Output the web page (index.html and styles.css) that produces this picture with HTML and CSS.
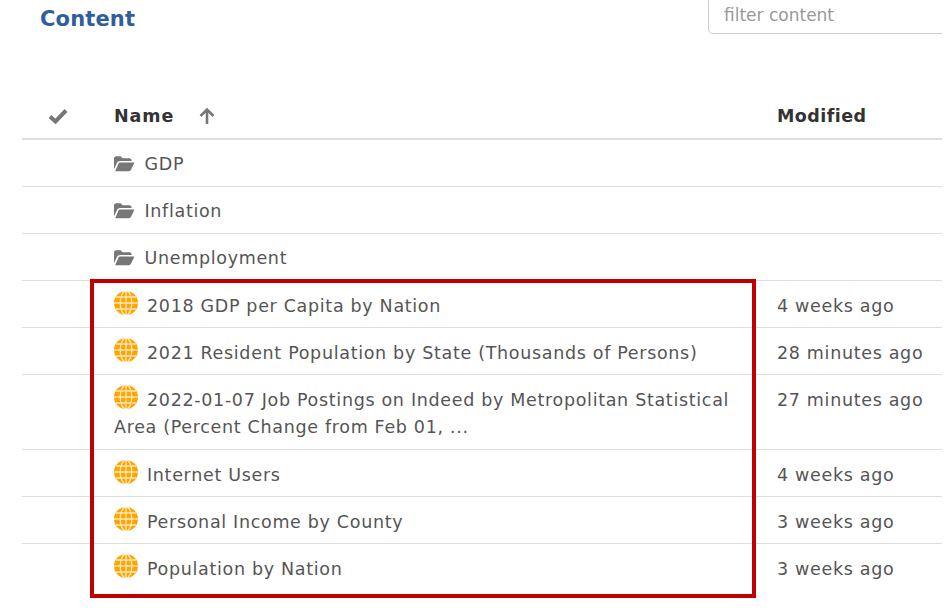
FILE: index.html
```html
<!DOCTYPE html>
<html lang="en">
<head>
<meta charset="utf-8">
<title>Content</title>
<link rel="stylesheet" href="styles.css">
</head>
<body>
<svg class="defs" width="0" height="0" aria-hidden="true">
  <symbol id="globe" viewBox="0 0 24 24">
    <circle cx="12" cy="12" r="12" fill="#ffa500"/>
    <g fill="none" stroke="#fff" stroke-width="1.3" opacity=".72">
      <ellipse cx="12" cy="12" rx="5.8" ry="12"/>
      <path d="M12 0v24M0 12h24M2 6h20M2 18h20"/>
    </g>
  </symbol>
  <symbol id="folder" viewBox="0 0 21 16">
    <path fill="#777" d="M0 2.200C0 1 1 0 2.200 0h4.600l2 2.200h7c1.200 0 2.200 1 2.200 2.200V5H6.200c-1.300 0-2.500.7-3.100 1.900L0 13z"/>
    <path fill="#777" d="M6.400 6.400H21l-3.600 7.600c-.4.8-1.200 1.300-2 1.300H1.200l3.300-7.600c.4-.8 1.100-1.300 1.900-1.300z"/>
  </symbol>
</svg>
<main class="page">
  <header class="top">
    <h1 class="title">Content</h1>
    <input class="filter" type="text" placeholder="filter content">
  </header>
  <section class="listing">
    <div class="row head">
      <div class="check"><svg width="20" height="16" viewBox="0 0 20 16"><path d="M2 8.500l5.500 5L18 2.500" fill="none" stroke="#777" stroke-width="4"/></svg></div>
      <div class="name"><span class="name-label">Name</span><svg class="arrow" width="16" height="18" viewBox="0 0 16 18"><path d="M8 17V2.500M1.500 9L8 2.500 14.500 9" fill="none" stroke="#777" stroke-width="2.600"/></svg></div>
      <div class="modified">Modified</div>
    </div>
    <div class="row"><div class="check"></div><div class="name"><svg class="folder"><use href="#folder"/></svg>GDP</div><div class="modified"></div></div>
    <div class="row"><div class="check"></div><div class="name"><svg class="folder"><use href="#folder"/></svg>Inflation</div><div class="modified"></div></div>
    <div class="row"><div class="check"></div><div class="name"><svg class="folder"><use href="#folder"/></svg>Unemployment</div><div class="modified"></div></div>
    <div class="row item"><div class="check"></div><div class="name"><svg class="globe"><use href="#globe"/></svg>2018 GDP per Capita by Nation</div><div class="modified">4 weeks ago</div></div>
    <div class="row item"><div class="check"></div><div class="name"><svg class="globe"><use href="#globe"/></svg>2021 Resident Population by State (Thousands of Persons)</div><div class="modified">28 minutes ago</div></div>
    <div class="row item tall"><div class="check"></div><div class="name"><svg class="globe"><use href="#globe"/></svg>2022-01-07 Job Postings on Indeed by Metropolitan Statistical Area (Percent Change from Feb 01, ...</div><div class="modified">27 minutes ago</div></div>
    <div class="row item"><div class="check"></div><div class="name"><svg class="globe"><use href="#globe"/></svg>Internet Users</div><div class="modified">4 weeks ago</div></div>
    <div class="row item"><div class="check"></div><div class="name"><svg class="globe"><use href="#globe"/></svg>Personal Income by County</div><div class="modified">3 weeks ago</div></div>
    <div class="row item last"><div class="check"></div><div class="name"><svg class="globe"><use href="#globe"/></svg>Population by Nation</div><div class="modified">3 weeks ago</div></div>
  </section>
</main>
<div class="highlight"></div>
</body>
</html>
```
FILE: styles.css
```css
html, body {
  margin: 0;
  height: 100%;
  overflow: hidden;
  background: #fff;
}
body {
  font-family: "DejaVu Sans", sans-serif;
  font-size: 17.500px;
  line-height: 27px;
  letter-spacing: 0.68px;
  color: #555;
}
.defs { position: absolute; }
.page {
  width: 920px;
  margin-left: 22px;
  overflow: hidden;
}
.top {
  display: flex;
  justify-content: space-between;
  align-items: flex-end;
  height: 34px;
  padding-left: 18px;
}
.title {
  margin: 0;
  font-size: 21px;
  line-height: 30px;
  letter-spacing: 0.15px;
  font-weight: 700;
  color: #2f5d9e;
}
.filter {
  box-sizing: border-box;
  flex: none;
  width: 260px;
  height: 38px;
  margin-right: -26px;
  padding: 0 15px;
  border: 1px solid #ccc;
  border-radius: 5px;
  font: inherit;
  font-size: 17px;
  letter-spacing: 0;
  color: #555;
}
.filter::placeholder { color: #999; opacity: 1; }
.listing { margin-top: 57px; }
.row {
  display: grid;
  grid-template-columns: 92px 663px 165px;
  border-bottom: 1px solid #ddd;
  padding: 11px 0 8px;
}
.row.item { padding: 12px 0 7px; }
.row.item.tall { padding-bottom: 8px; }
.row.last { border-bottom: 0; }
.row.head {
  border-bottom: 2px solid #ddd;
  padding: 12px 0 8px;
  font-weight: 700;
  letter-spacing: 0.45px;
  color: #333;
}
.check { padding-left: 26px; }
.check svg { vertical-align: -2px; }
.name { padding-right: 20px; }
.name-label { letter-spacing: 0.9px; }
.arrow { margin-left: 25px; vertical-align: -3px; }
.folder {
  width: 20.500px;
  height: 16px;
  margin-right: 10px;
  vertical-align: -2px;
}
.globe {
  width: 24px;
  height: 24px;
  margin: -2px 9.500px 0 -0.500px;
  vertical-align: top;
}
.highlight {
  position: absolute;
  left: 90px;
  top: 279px;
  width: 658px;
  height: 311px;
  border: 4px solid #c00000;
  pointer-events: none;
}
```
